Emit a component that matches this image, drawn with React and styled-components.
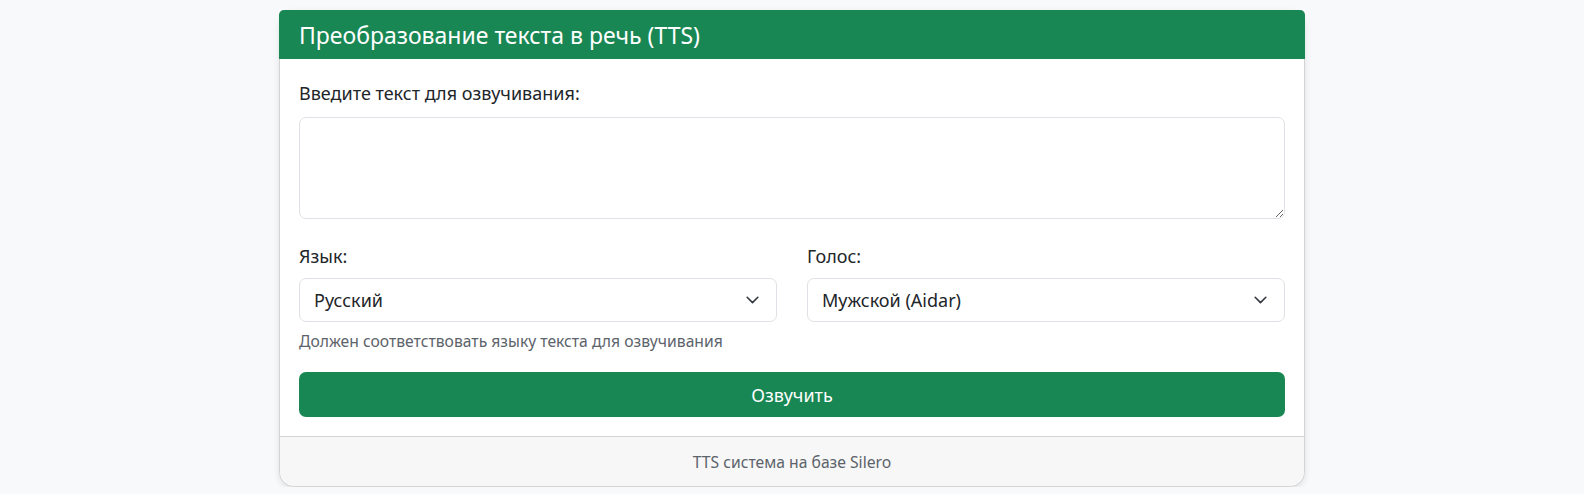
import styled, { createGlobalStyle } from 'styled-components'

const GlobalStyle = createGlobalStyle`
  html, body {
    margin: 0;
    padding: 0;
    background: #f8f9fa;
  }
  body {
    font-family: "Noto Sans", "Open Sans", sans-serif;
    color: #212529;
  }
`

const Page = styled.main`
  padding-top: 10px;
  display: flex;
  justify-content: center;
`

const Card = styled.section`
  width: 1026px;
  box-sizing: border-box;
  background: #fff;
  border: 1px solid #d3d3d3;
  border-radius: 15px;
  box-shadow: 0 2px 6px rgba(0, 0, 0, 0.1);
  display: flex;
  flex-direction: column;
`

const Header = styled.header`
  margin: -1px -1px 0;
  height: 49px;
  box-sizing: border-box;
  padding: 0 20px;
  display: flex;
  align-items: center;
  background: #198754;
  color: #fff;
  border-radius: 5px 5px 0 0;

  h1 {
    margin: 0;
    font-size: 23px;
    font-weight: 400;
  }
`

const Body = styled.div`
  padding: 20px 19px 19px;
  display: flex;
  flex-direction: column;
`

const Field = styled.div`
  display: flex;
  flex-direction: column;
  margin-bottom: ${p => p.$mb || 0}px;
`

const Label = styled.label`
  font-size: 18px;
  line-height: 29px;
  margin-bottom: ${p => p.$mb || 9}px;
`

const TextArea = styled.textarea`
  height: 102px;
  box-sizing: border-box;
  border: 1px solid #dee2e6;
  border-radius: 7px;
  resize: vertical;
  padding: 7px 14px;
  font: inherit;
  font-size: 18px;
  outline: none;
`

const Row = styled.div`
  display: grid;
  grid-template-columns: 1fr 1fr;
  column-gap: 30px;
`

const SelectWrap = styled.div`
  position: relative;
  height: 44px;

  svg {
    position: absolute;
    right: 18px;
    top: 50%;
    transform: translateY(-50%);
    pointer-events: none;
  }
`

const Select = styled.select`
  appearance: none;
  width: 100%;
  height: 100%;
  box-sizing: border-box;
  border: 1px solid #dee2e6;
  border-radius: 7px;
  background: #fff;
  padding: 0 44px 0 14px;
  font: inherit;
  font-size: 18px;
  color: #212529;
  outline: none;
`

const Hint = styled.div`
  margin-top: 7px;
  font-size: 15.7px;
  line-height: 24px;
  color: #5c636a;
`

const Button = styled.button`
  margin-top: 19px;
  height: 45px;
  border: none;
  border-radius: 7px;
  background: #198754;
  color: #fff;
  font: inherit;
  font-size: 18px;
  cursor: pointer;
`

const Footer = styled.footer`
  height: 49px;
  display: flex;
  align-items: center;
  justify-content: center;
  background: #f7f7f7;
  border-top: 1px solid #d3d3d3;
  border-radius: 0 0 15px 15px;
  font-size: 15.7px;
  color: #5c636a;
`

const Chevron = () => (
  <svg width="13" height="8" viewBox="0 0 12 7.5" fill="none">
    <path d="M1 1.2l5 5 5-5" stroke="#343a40" strokeWidth="1.5" strokeLinecap="round" strokeLinejoin="round" />
  </svg>
)

const App = () => {
  return (
    <Page>
      <GlobalStyle />
      <Card>
        <Header>
          <h1>Преобразование текста в речь (TTS)</h1>
        </Header>
        <Body>
          <Field $mb={23}>
            <Label htmlFor="text">Введите текст для озвучивания:</Label>
            <TextArea id="text" />
          </Field>
          <Row>
            <Field>
              <Label htmlFor="lang" $mb={7}>Язык:</Label>
              <SelectWrap>
                <Select id="lang" defaultValue="ru">
                  <option value="ru">Русский</option>
                  <option value="en">English</option>
                </Select>
                <Chevron />
              </SelectWrap>
              <Hint>Должен соответствовать языку текста для озвучивания</Hint>
            </Field>
            <Field>
              <Label htmlFor="voice" $mb={7}>Голос:</Label>
              <SelectWrap>
                <Select id="voice" defaultValue="aidar">
                  <option value="aidar">Мужской (Aidar)</option>
                  <option value="baya">Женский (Baya)</option>
                </Select>
                <Chevron />
              </SelectWrap>
            </Field>
          </Row>
          <Button>Озвучить</Button>
        </Body>
        <Footer>TTS система на базе Silero</Footer>
      </Card>
    </Page>
  )
}

export default App
